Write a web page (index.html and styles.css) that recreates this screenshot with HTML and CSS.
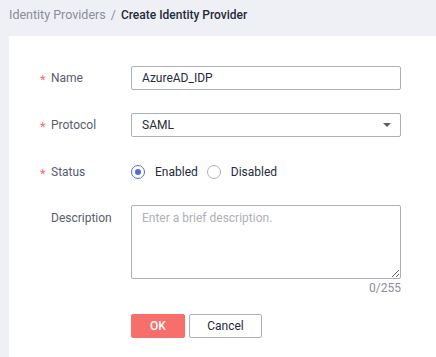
FILE: index.html
```html
<!DOCTYPE html>
<html lang="en">
<head>
  <meta charset="UTF-8">
  <meta name="viewport" content="width=device-width, initial-scale=1.0">
  <title>Create Identity Provider</title>
  <link rel="stylesheet" href="styles.css">
</head>
<body>
  <div class="breadcrumb">
    <a class="crumb-link" href="#">Identity Providers</a>
    <span class="crumb-sep">/</span>
    <span class="crumb-current">Create Identity Provider</span>
  </div>

  <div class="card">
    <form class="form">
      <div class="form-item">
        <label class="form-label required">Name</label>
        <input class="text-input" type="text" value="AzureAD_IDP">
      </div>

      <div class="form-item">
        <label class="form-label required">Protocol</label>
        <div class="select">
          <span>SAML</span>
          <span class="select-arrow"></span>
        </div>
      </div>

      <div class="form-item status-item">
        <label class="form-label required">Status</label>
        <div class="radio-group">
          <label class="radio checked"><span class="radio-dot"></span>Enabled</label>
          <label class="radio"><span class="radio-dot"></span>Disabled</label>
        </div>
      </div>

      <div class="form-item desc-item">
        <label class="form-label">Description</label>
        <div class="textarea-wrap">
          <textarea class="textarea" placeholder="Enter a brief description."></textarea>
          <div class="counter">0/255</div>
        </div>
      </div>

      <div class="form-actions">
        <button type="button" class="btn btn-primary">OK</button>
        <button type="button" class="btn btn-default">Cancel</button>
      </div>
    </form>
  </div>
</body>
</html>
```

FILE: styles.css
```css
body {
  margin: 0;
  background-color: #eef0f5;
  font-family: Roboto, "Liberation Sans", Arial, sans-serif;
  font-size: 12px;
  color: #252b3a;
}
.breadcrumb {
  height: 36px;
  box-sizing: border-box;
  padding: 7px 0 0 9px;
  display: flex;
  align-items: flex-start;
  font-size: 12.5px;
  line-height: 16px;
}
.crumb-link {
  color: #8a8e99;
  text-decoration: none;
}
.crumb-sep {
  color: #8a8e99;
  margin: 0 5px;
}
.crumb-current {
  color: #252b3a;
  font-weight: 500;
  font-size: 12px;
}
.card {
  margin-left: 9px;
  background: #fff;
  min-height: 321px;
  padding-top: 30px;
  box-sizing: border-box;
}
.form-item {
  display: flex;
  align-items: center;
  margin-bottom: 23px;
}
.form-label {
  width: 80px;
  padding-left: 42px;
  color: #575d6c;
  font-size: 12px;
  position: relative;
}
.form-label.required::before {
  content: "*";
  position: absolute;
  left: 31px;
  top: 1px;
  color: #f66f6a;
  font-size: 13px;
}
.text-input,
.select,
.textarea {
  width: 270px;
  height: 24px;
  box-sizing: border-box;
  border: 1px solid #adb0b8;
  border-radius: 2px;
  padding: 0 10px;
  font-family: inherit;
  font-size: 12px;
  color: #252b3a;
  outline: none;
}
.select {
  display: flex;
  align-items: center;
  justify-content: space-between;
  padding-right: 9px;
}
.select-arrow {
  width: 0;
  height: 0;
  border-left: 4px solid transparent;
  border-right: 4px solid transparent;
  border-top: 4px solid #575d6c;
}
.status-item {
  margin-bottom: 21px;
}
.radio-group {
  display: flex;
  align-items: center;
  height: 24px;
}
.radio {
  display: flex;
  align-items: center;
  color: #252b3a;
  margin-right: 9px;
}
.radio-dot {
  width: 14px;
  height: 14px;
  box-sizing: border-box;
  border: 1px solid #adb0b8;
  border-radius: 50%;
  margin-right: 10px;
  position: relative;
}
.radio.checked .radio-dot {
  border-color: #526ecc;
}
.radio.checked .radio-dot::after {
  content: "";
  position: absolute;
  left: 3px;
  top: 3px;
  width: 6px;
  height: 6px;
  border-radius: 50%;
  background: #526ecc;
}
.desc-item {
  align-items: flex-start;
  margin-bottom: 17px;
}
.desc-item .form-label {
  padding-top: 6px;
}
.textarea {
  display: block;
  height: 74px;
  padding: 5px 10px;
  resize: vertical;
}
.textarea::placeholder {
  color: #adb0b8;
}
.counter {
  text-align: right;
  color: #8a8e99;
  line-height: 18px;
}
.form-actions {
  padding-left: 122px;
  display: flex;
  gap: 4px;
}
.btn {
  height: 24px;
  border-radius: 2px;
  font-family: inherit;
  font-size: 12px;
  cursor: pointer;
}
.btn-primary {
  width: 54px;
  background: #f66f6a;
  border: 1px solid #f66f6a;
  color: #fff;
  font-weight: 500;
}
.btn-default {
  width: 73px;
  background: #fff;
  border: 1px solid #adb0b8;
  color: #252b3a;
}
```
